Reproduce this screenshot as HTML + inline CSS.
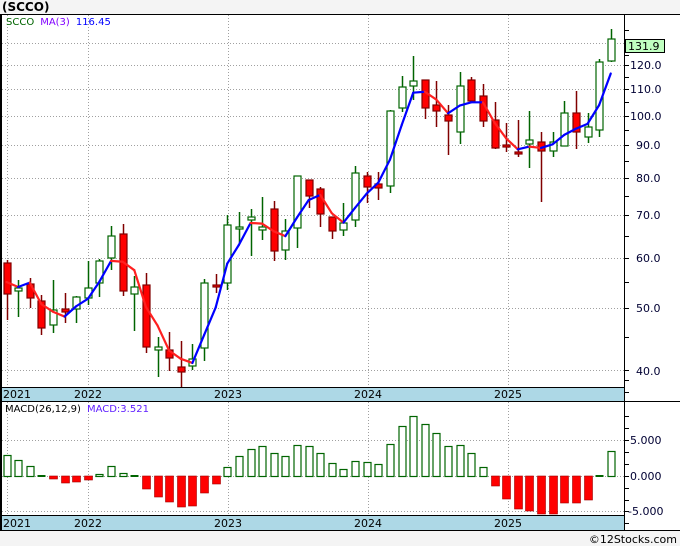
<!DOCTYPE html>
<html><head><meta charset="utf-8"><style>
html,body{margin:0;padding:0;background:#f4f4f4;}
svg{display:block;font-family:"DejaVu Sans","Liberation Sans",sans-serif;}
</style></head><body>
<svg id="s" width="680" height="546" xmlns="http://www.w3.org/2000/svg">
<rect x="0" y="0" width="680" height="546" fill="#f4f4f4"/>
<rect x="0" y="14" width="680" height="517" fill="#fff"/>
<text x="2" y="11" font-size="12" font-weight="bold" fill="#000">(SCCO)</text>
<g id="grid" stroke="#a0a0a0" stroke-width="1" stroke-dasharray="1,2"></g>
<g id="c"></g>
<rect x="1" y="387" width="623" height="14" fill="#add8e6"/>
<rect x="1" y="516" width="623" height="14" fill="#add8e6"/>
<g font-size="11" fill="#000">
<text x="3" y="398">2021</text><text x="74" y="398">2022</text><text x="214" y="398">2023</text><text x="354" y="398">2024</text><text x="494" y="398">2025</text>
<text x="3" y="527">2021</text><text x="74" y="527">2022</text><text x="214" y="527">2023</text><text x="354" y="527">2024</text><text x="494" y="527">2025</text>
</g>
<g stroke="#000" stroke-width="1" fill="none">
<line x1="0" y1="14.5" x2="680" y2="14.5"/>
<line x1="1" y1="387.5" x2="624" y2="387.5"/>
<line x1="0" y1="401.5" x2="680" y2="401.5"/>
<line x1="1" y1="515.5" x2="624" y2="515.5"/>
<line x1="0" y1="530.5" x2="680" y2="530.5"/>
<line x1="624.5" y1="14" x2="624.5" y2="531"/>
</g>
<rect x="0" y="14" width="2" height="517" fill="#000"/>
<g id="ticks" stroke="#000"></g>
<g font-size="11" fill="#000033">
<text x="630" y="69">120.0</text><text x="630" y="93">110.0</text><text x="630" y="120">100.0</text>
<text x="636" y="149">90.0</text><text x="636" y="182">80.0</text><text x="636" y="219">70.0</text>
<text x="636" y="262">60.0</text><text x="636" y="312">50.0</text><text x="636" y="375">40.0</text>
<text x="630" y="444">5.000</text><text x="630" y="480">0.000</text><text x="628" y="515">-5.000</text>
</g>
<rect x="625.5" y="39.5" width="39" height="13" fill="#c0ffc0" stroke="#000"/>
<text x="628" y="50" font-size="11" fill="#000">131.9</text>
<text x="6" y="25" font-size="10"><tspan fill="#006400">SCCO</tspan><tspan dx="6" fill="#8000ff">MA(3)</tspan><tspan dx="6" fill="#0000ff">116.45</tspan></text>
<text x="5" y="412" font-size="10"><tspan fill="#000">MACD(26,12,9)</tspan><tspan dx="6" fill="#6020ff">MACD:3.521</tspan></text>
<text x="677" y="543" font-size="11" text-anchor="end" fill="#000">©12Stocks.com</text>
</svg>
<script>
var NS="http://www.w3.org/2000/svg";
function el(p,t,a){var e=document.createElementNS(NS,t);for(var k in a)e.setAttribute(k,a[k]);p.appendChild(e);return e;}
var g=document.getElementById('grid');
[7.5,88.5,228.5,368.5,508.5].forEach(function(x){el(g,'line',{x1:x,y1:15,x2:x,y2:387});el(g,'line',{x1:x,y1:402,x2:x,y2:515});});
[43.5,65.5,89.5,116.5,145.5,178.5,215.5,258.5,308.5,370.5,440.5,476.5,511.5].forEach(function(y){el(g,'line',{x1:2,y1:y,x2:624,y2:y});});
var tk=document.getElementById('ticks');
[30,43,55,65,77,89,102,116,130,145,161,178,196,215,236,258,282,308,337,370,380,392,416,428,440,452,464,476,488,500,511,523].forEach(function(y){el(tk,'line',{x1:624,y1:y+.5,x2:629,y2:y+.5});});
var D=[[294,263,260,320,0],[291,288,280,317,1],[284,298,278,308,0],[301,328,295,335,0],[325,310,280,333,1],[309,312,293,323,0],[309,297,296,323,1],[298,288,261,305,1],[283,261,259,297,1],[258,236,226,270,1],[234,291,224,296,0],[294,287,276,331,1],[285,347,273,353,0],[350,347,337,377,1],[350,358,332,371,0],[367,372,341,387,0],[366,359,344,370,1],[348,283,279,361,1],[285,287,274,293,0],[283,225,215,290,1],[229,227,212,243,1],[220,217,209,256,1],[230,227,197,240,1],[209,251,201,261,0],[250,231,219,260,1],[228,176,176,248,1],[180,196,180,208,0],[189,214,187,227,0],[217,231,217,239,0],[230,223,203,236,1],[220,173,166,227,1],[176,187,172,203,0],[184,188,172,200,0],[186,111,110,193,1],[108,87,76,112,1],[86,81,56,100,1],[80,108,80,119,0],[105,111,81,127,0],[115,121,105,155,0],[132,86,72,144,1],[80,101,77,103,0],[96,121,84,127,0],[120,148,102,149,0],[145,147,123,152,0],[152,153,120,157,0],[144,140,111,168,1],[142,151,132,202,0],[151,142,132,157,1],[146,113,101,146,1],[113,132,91,149,0],[137,127,113,143,1],[130,62,59,137,1],[61,39,29,62,1]];
var M=[455,460,466,476,479,483,482,480,474,466,473,477,489,497,502,507,506,493,484,467,456,449,446,453,456,445,446,453,463,469,461,462,464,444,426,416,424,433,446,445,453,467,486,499,509,511,514,514,503,503,500,475,451];
var c=document.getElementById('c');
function X(i){return 6.5+i*11.62;}
D.forEach(function(d,i){var x=Math.round(X(i))+.5;var col=d[4]?'#006400':'#800000';
el(c,'line',{x1:x,y1:d[2],x2:x,y2:d[3],stroke:col,'stroke-width':1.5});
var t=Math.min(d[0],d[1]),b=Math.max(d[0],d[1]);if(b-t<2)b=t+2;
el(c,'rect',{x:x-3.5,y:t,width:7,height:b-t,fill:d[4]?'#fff':'#ff0000',stroke:col,'stroke-width':1.2});});
var K=370,B=277.6;function P(y){return Math.exp((K-y)/B)*40;}function Y(p){return K-B*Math.log(p/40);}
var ma=[[X(0),282],[X(1),287]];for(var i=2;i<D.length;i++){ma.push([X(i),Y((P(D[i][1])+P(D[i-1][1])+P(D[i-2][1]))/3)]);}
for(var j=1;j<ma.length;j++){el(c,'line',{x1:ma[j-1][0],y1:ma[j-1][1],x2:ma[j][0],y2:ma[j][1],stroke:ma[j][1]>ma[j-1][1]?'#ff2020':'#0000ff','stroke-width':2.2,'stroke-linecap':'round'});}
M.forEach(function(v,i){var x=Math.round(X(i))-3.5;var pos=v<=476;
var t=Math.min(v,476),h=Math.abs(476-v);if(h<1.5){el(c,'rect',{x:x,y:475,width:8,height:2,fill:'#006400'});return;}
if(pos)el(c,'rect',{x:x+.5,y:t+.5,width:7,height:h,fill:'#fff',stroke:'#006400','stroke-width':1.2});
else el(c,'rect',{x:x,y:476,width:8,height:h,fill:'#ff0000',stroke:'#a00000','stroke-width':.6});});
</script>
</body></html>
